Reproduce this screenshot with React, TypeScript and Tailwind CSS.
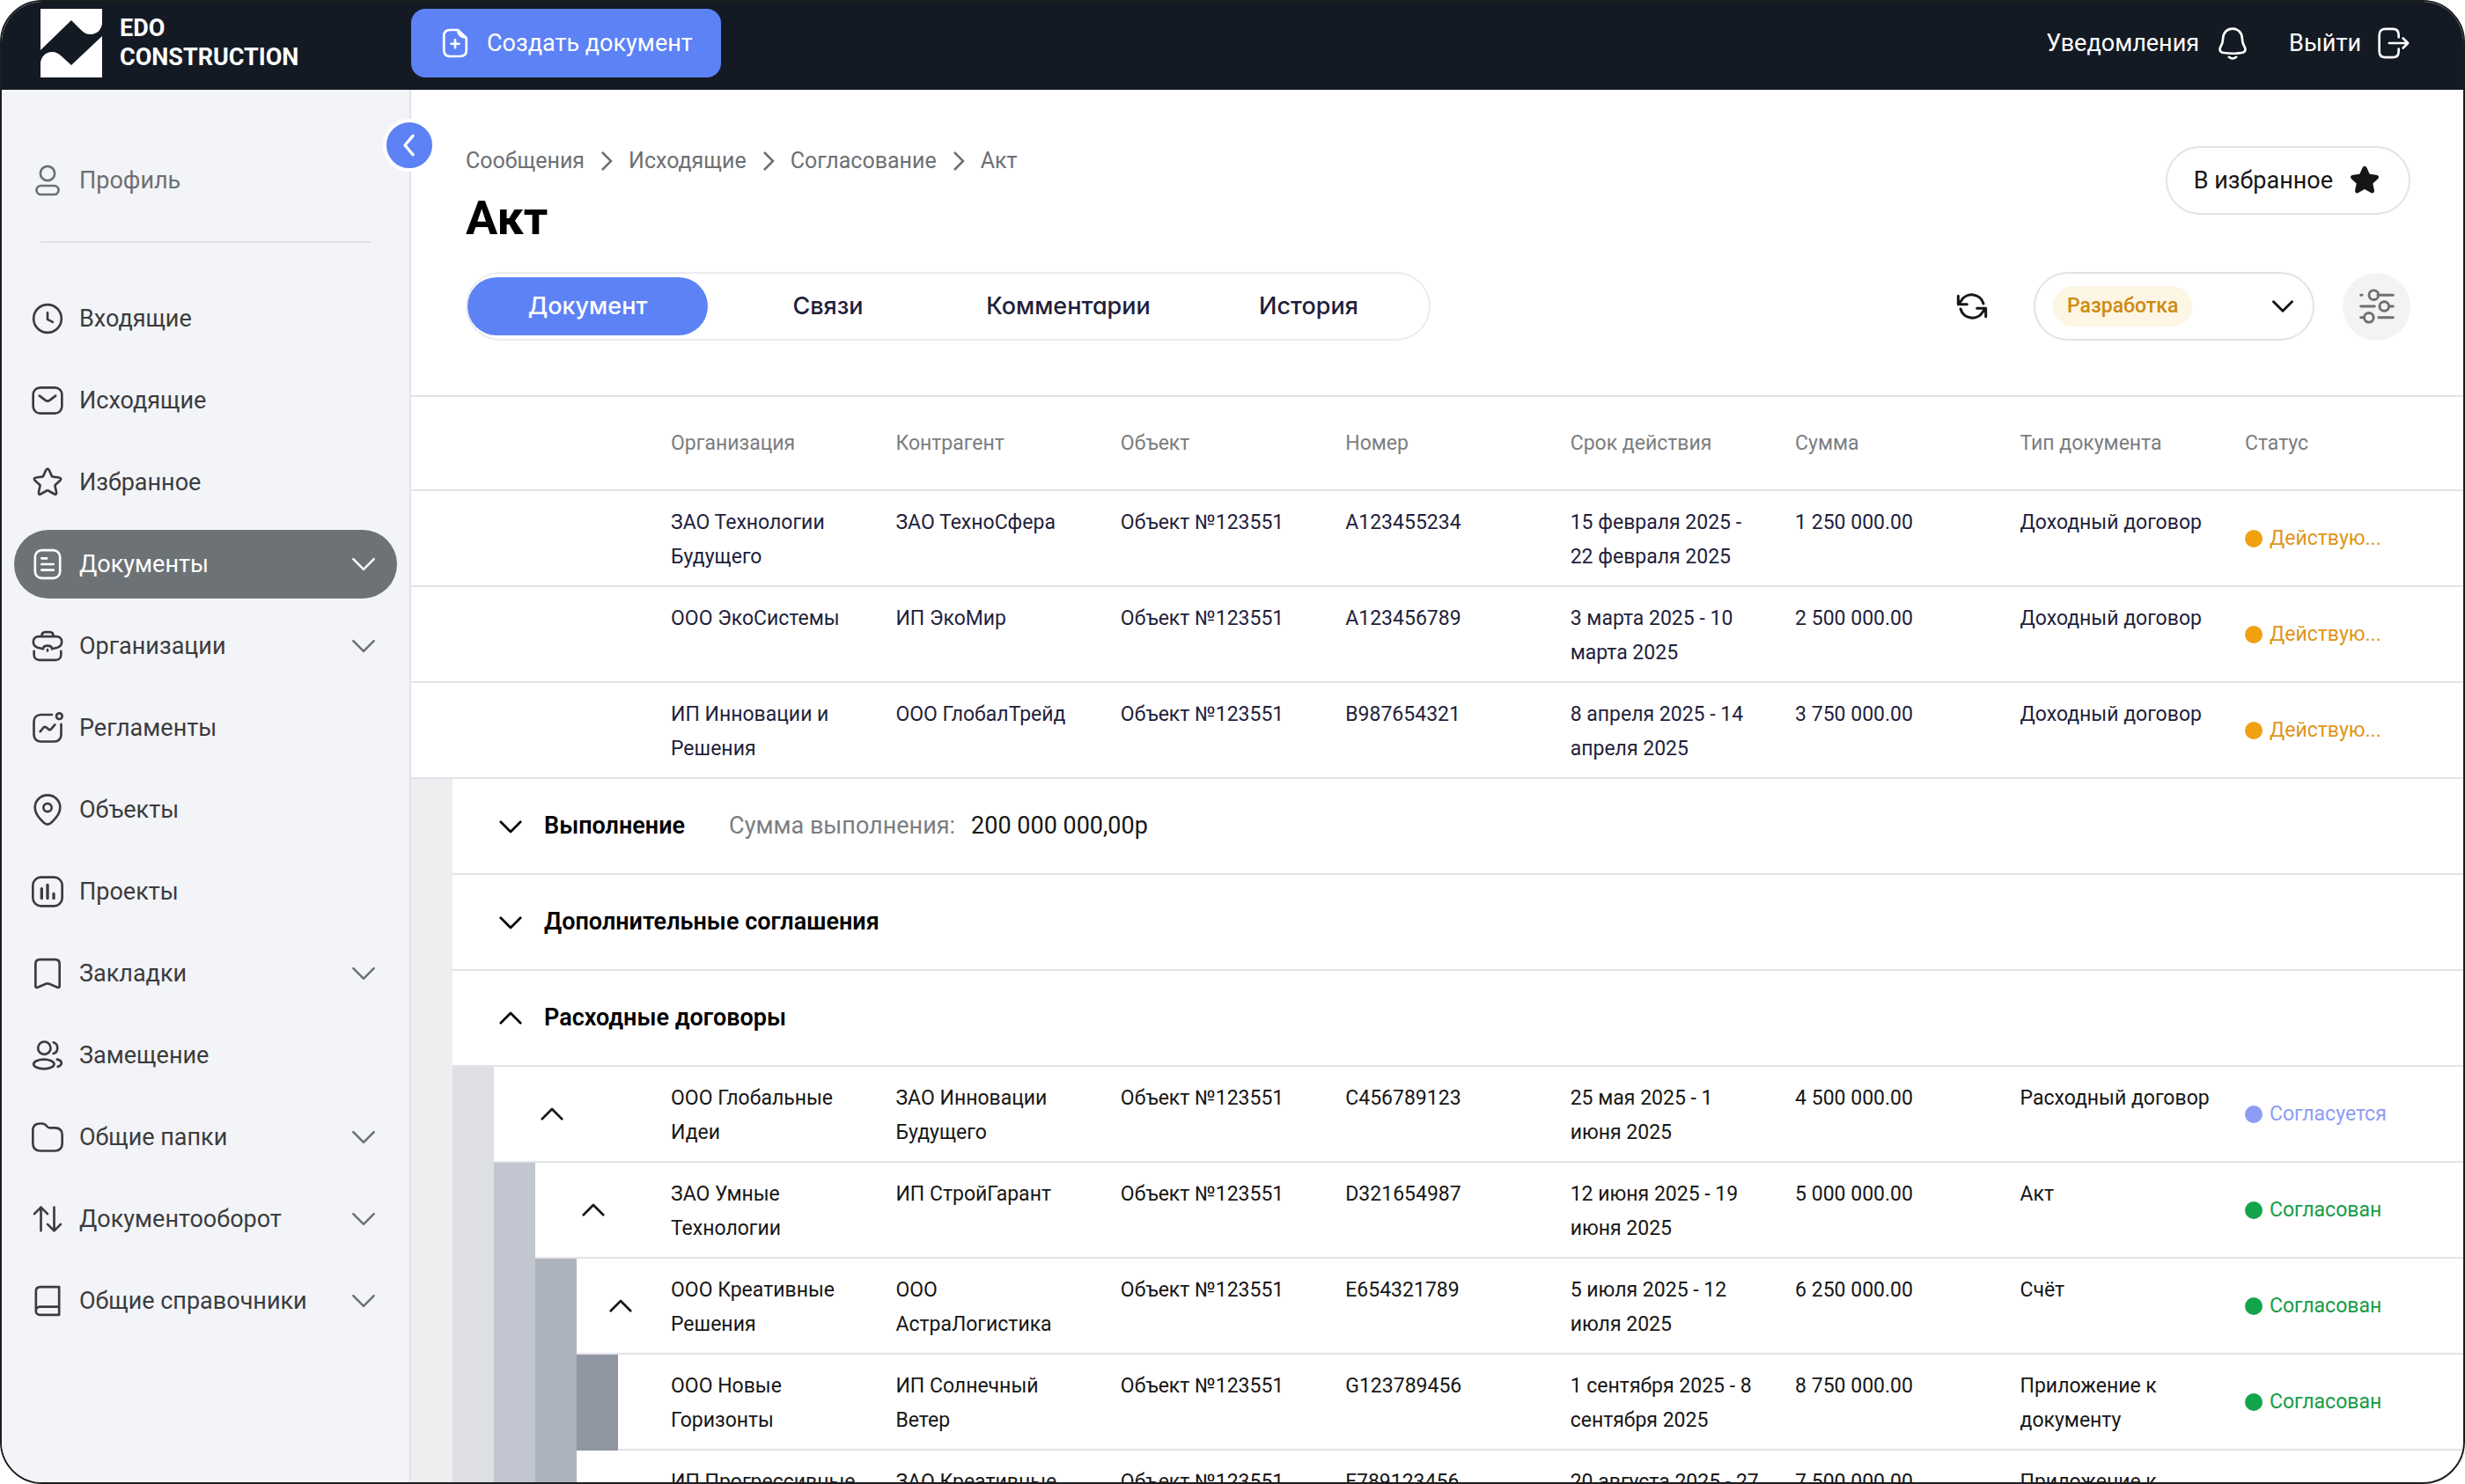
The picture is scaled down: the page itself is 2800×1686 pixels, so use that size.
import React from "react";

type IconProps = { className?: string; children: React.ReactNode; sw?: number };
function Icon({ className = "size-10", children, sw = 1.6 }: IconProps) {
  return (
    <svg viewBox="0 0 24 24" className={`${className} shrink-0`} fill="none" stroke="currentColor" strokeWidth={sw} strokeLinecap="round" strokeLinejoin="round" aria-hidden="true">
      {children}
    </svg>
  );
}

const STAR = "M12 2.800c.5 0 .9.4 1.200 1.100l1.700 3.800c.1.300.4.500.7.500l4.100.5c1.500.200 1.900 1.100.8 2.100l-3.100 2.800c-.2.200-.3.500-.3.800l.9 4.200c.3 1.400-.4 2-1.700 1.200l-3.700-2.100a1.200 1.200 0 0 0-1.200 0l-3.700 2.100c-1.300.8-2 .2-1.700-1.200l.9-4.200c.1-.3 0-.6-.3-.8l-3.100-2.800c-1.100-1-.7-1.900.8-2.100l4.100-.5c.3 0 .6-.2.700-.5l1.700-3.800c.3-.7.7-1.100 1.200-1.100z";

const ChevronDown = ({ className = "size-10", sw = 1.5 }: { className?: string; sw?: number }) => (
  <Icon className={className} sw={sw}><path d="m5 8.500 7 7 7-7" /></Icon>
);
const ChevronUp = () => (
  <Icon className="size-9" sw={1.8}><path d="m4.500 15.500 7.500-7.500 7.500 7.500" /></Icon>
);

const icons = {
  user: <><circle cx="12" cy="7.200" r="4.900" /><rect x="4.500" y="15.600" width="15" height="6" rx="3" /></>,
  clock: <><circle cx="12" cy="12" r="9.500" /><path d="M12 8v4.500l3.500 1.800" /></>,
  mail: <><rect x="2.200" y="3.200" width="19.600" height="17.600" rx="4.800" /><path d="m6.500 8.800 3.900 3c1 .7 2.200.7 3.200 0l3.900-3" /></>,
  star: <path d={STAR} />,
  doc: <><rect x="3.500" y="2.500" width="17" height="19" rx="4.500" /><path d="M8 8h3.500M8 12h8M8 16h8" /></>,
  bag: <><path d="M8 5.500c0-2 1-3 2.500-3h3c1.500 0 2.500 1 2.500 3M6 5.500h12c2.200 0 3.700 1.400 3.700 3.500s-1 3.400-3 4l-3.700 1c0-1.400-1.300-2.200-3-2.200s-3 .8-3 2.200l-3.700-1c-2-.6-3-1.900-3-4s1.500-3.500 3.700-3.500zM2.800 15.500v2.300c0 2.200 1.400 3.700 3.700 3.700h11c2.300 0 3.700-1.500 3.700-3.700v-2.300M12 14.500v.8" /></>,
  trend: <><path d="M15 3H7.500C4.500 3 2.700 4.800 2.700 7.800v8.700c0 3 1.800 4.800 4.800 4.800h9c3 0 4.800-1.800 4.800-4.800V9.500" /><circle cx="20" cy="4" r="2" /><path d="m7 14.500 2.300-2.800c.5-.5 1.200-.5 1.700-.1l1.800 1.400c.5.400 1.200.300 1.600-.2L17 9.800" /></>,
  pin: <><path d="M12 22c-1.200 0-2-.6-3.100-1.700C5.700 17.300 3.400 14.500 3.400 10.400a8.600 8.400 0 0 1 17.200 0c0 4.100-2.300 6.900-5.500 9.900C14 21.400 13.200 22 12 22z" /><circle cx="12" cy="10.500" r="2.800" /></>,
  chart: <><rect x="2" y="2.200" width="20" height="19.600" rx="5.500" /><path d="M8 10v6.500M12 7.500v9M16.200 13.500v3" strokeWidth="2" /></>,
  bookmark: <path d="M3.800 20.500V5.500c0-2 1-3 3-3h10.400c2 0 3 1 3 3v15c0 1-.6 1.300-1.500.9l-5.500-2.300c-.8-.400-1.600-.400-2.400 0l-5.500 2.300c-.9.400-1.500.1-1.500-.9z" />,
  users: <><circle cx="9.800" cy="7" r="4.300" /><ellipse cx="9.500" cy="18" rx="7" ry="3.200" /><path d="M16 3.200a4 4 0 0 1 0 7.600M18.500 14.800c1.900.4 3 1.300 3 2.500s-.9 2-2.500 2.400" /></>,
  folder: <path d="M22 10.500v5.700c0 3.300-1.900 5.100-5.200 5.100H7.200C3.900 21.300 2 19.500 2 16.200V7.500C2 4.300 3.700 2.700 6.800 2.700h1.500c1.300 0 2.200.5 3 1.500l.5.600c.5.600 1 .8 1.800.8H17c3.200 0 5 1.700 5 4.900z" />,
  arrows: <path d="M7.500 20V4M3 8.500 7.500 4 12 8.500M16.500 4v16M12 15.500l4.500 4.500 4.500-4.500" />,
  book: <path d="M19.900 16V2.500H7.100c-2 0-3 1-3 3v13.200M19.900 16v5.500H6.800a2.700 2.700 0 0 1 0-5.500h13.100" />,
};

const nav: { icon: keyof typeof icons; label: string; open?: boolean; active?: boolean }[] = [
  { icon: "clock", label: "Входящие" },
  { icon: "mail", label: "Исходящие" },
  { icon: "star", label: "Избранное" },
  { icon: "doc", label: "Документы", open: true, active: true },
  { icon: "bag", label: "Организации", open: true },
  { icon: "trend", label: "Регламенты" },
  { icon: "pin", label: "Объекты" },
  { icon: "chart", label: "Проекты" },
  { icon: "bookmark", label: "Закладки", open: true },
  { icon: "users", label: "Замещение" },
  { icon: "folder", label: "Общие папки", open: true },
  { icon: "arrows", label: "Документооборот", open: true },
  { icon: "book", label: "Общие справочники", open: true },
];

type Row = { level: number; cells: string[]; status: "active" | "review" | "done"; toggle?: boolean };
const topRows: Row[] = [
  { level: 0, cells: ["ЗАО Технологии Будущего", "ЗАО ТехноСфера", "Объект №123551", "A123455234", "15 февраля 2025 - 22 февраля 2025", "1 250 000.00", "Доходный договор"], status: "active" },
  { level: 0, cells: ["ООО ЭкоСистемы", "ИП ЭкоМир", "Объект №123551", "A123456789", "3 марта 2025 - 10 марта 2025", "2 500 000.00", "Доходный договор"], status: "active" },
  { level: 0, cells: ["ИП Инновации и Решения", "ООО ГлобалТрейд", "Объект №123551", "B987654321", "8 апреля 2025 - 14 апреля 2025", "3 750 000.00", "Доходный договор"], status: "active" },
];
const sections = [
  { title: "Выполнение", sum: "200 000 000,00р", open: false },
  { title: "Дополнительные соглашения", open: false },
  { title: "Расходные договоры", open: true },
];
const treeRows: Row[] = [
  { level: 2, toggle: true, cells: ["ООО Глобальные Идеи", "ЗАО Инновации Будущего", "Объект №123551", "C456789123", "25 мая 2025 - 1 июня 2025", "4 500 000.00", "Расходный договор"], status: "review" },
  { level: 3, toggle: true, cells: ["ЗАО Умные Технологии", "ИП СтройГарант", "Объект №123551", "D321654987", "12 июня 2025 - 19 июня 2025", "5 000 000.00", "Акт"], status: "done" },
  { level: 4, toggle: true, cells: ["ООО Креативные Решения", "ООО АстраЛогистика", "Объект №123551", "E654321789", "5 июля 2025 - 12 июля 2025", "6 250 000.00", "Счёт"], status: "done" },
  { level: 5, cells: ["ООО Новые Горизонты", "ИП Солнечный Ветер", "Объект №123551", "G123789456", "1 сентября 2025 - 8 сентября 2025", "8 750 000.00", "Приложение к документу"], status: "done" },
  { level: 4, cells: ["ИП Прогрессивные Системы", "ЗАО Креативные Решения", "Объект №123551", "F789123456", "20 августа 2025 - 27 августа 2025", "7 500 000.00", "Приложение к документу"], status: "done" },
];
const columns = ["Организация", "Контрагент", "Объект", "Номер", "Срок действия", "Сумма", "Тип документа", "Статус"];

const levelColors = ["bg-[#edeef0]", "bg-[#dedfe3]", "bg-[#c2c6d0]", "bg-[#adb3bd]", "bg-[#8f95a1]"];
const statuses = {
  active: { text: "Действую...", color: "text-[#dd9619]", dot: "bg-[#f0a010]" },
  review: { text: "Согласуется", color: "text-[#8d9df5]", dot: "bg-[#8d9df5]" },
  done: { text: "Согласован", color: "text-[#169c46]", dot: "bg-[#14a44d]" },
};

function Bands({ level }: { level: number }) {
  return (
    <>
      {levelColors.slice(0, level).map((c) => (
        <div key={c} className={`${c} w-[47px] shrink-0`} />
      ))}
    </>
  );
}

function DataRow({ row }: { row: Row }) {
  const s = statuses[row.status];
  return (
    <tr className={`h-[109px] ${row.level ? "text-[#161616]" : "text-[#1f1f3d]"}`}>
      <td className="h-[109px] p-0">
        <div className="flex h-full min-h-[109px]">
          <Bands level={row.level} />
          <div className={`flex grow items-center border-b-2 border-[#e2e3e8] ${row.level === 4 ? "pl-8" : "pl-12"}`}>
            {row.toggle && (
              <button type="button" aria-label="Свернуть"><ChevronUp /></button>
            )}
          </div>
        </div>
      </td>
      {row.cells.map((c, i) => (
        <td key={i} className="border-b-2 border-[#e2e3e8] pt-4 pr-9 align-top">{c}</td>
      ))}
      <td className={`border-b-2 border-[#e2e3e8] align-middle whitespace-nowrap ${s.color}`}>
        <span className="flex items-center gap-2">
          <span className={`size-5 shrink-0 rounded-full ${s.dot}`} />
          {s.text}
        </span>
      </td>
    </tr>
  );
}

export default function App() {
  return (
    <div className="flex h-screen flex-col overflow-hidden rounded-[48px] border-2 border-[#1b1c1e] bg-white font-['Roboto',sans-serif] text-[#161616]">
      <header className="flex h-[100px] shrink-0 items-center bg-[#141a24] pr-[60px] pb-[6px] pl-11 text-[27px] text-white">
        <a href="#" className="flex w-[421px] items-center gap-5 leading-[33px] font-bold">
          <svg viewBox="0 0 70 78" className="h-[78px] w-[70px]" aria-hidden="true">
            <path fill="#fff" d="M0 0h70v17c-1 7-6 12-13 12-5 0-8-2-11-5L35 13 0 47z" />
            <path fill="#fff" d="M70 31v47H0V61c1-7 6-12 13-12 5 0 8 2 11 5l11 10z" />
          </svg>
          <span>EDO<br />CONSTRUCTION</span>
        </a>
        <button type="button" className="flex h-[78px] items-center gap-[18px] rounded-2xl bg-[#5d82f5] px-8">
          <Icon className="size-9" sw={1.8}>
            <path d="M14 2H8.500C5.200 2 3.500 3.600 3.500 6.500v11c0 2.900 1.700 4.500 5 4.500h7c3.300 0 5-1.600 5-4.500V8zM14 2c.3 3.500 2.200 5.700 6.500 6M12 9.500v6M9 12.500h6" />
          </Icon>
          Создать документ
        </button>
        <nav className="ml-auto flex items-center gap-11">
          <a href="#" className="flex items-center gap-[18px]">
            Уведомления
            <Icon>
              <path d="M12 2.200c-4 0-6.300 2.800-6.500 6.300-.1 2.500-.3 3.800-1.400 5.500-1.500 2.400-.8 4.200 1.900 4.600 4 .6 8 .6 12 0 2.700-.4 3.400-2.200 1.900-4.600-1.100-1.700-1.300-3-1.400-5.500-.2-3.500-2.500-6.300-6.500-6.300zM9.500 21.500c1.500 1.200 3.500 1.200 5 0" />
            </Icon>
          </a>
          <a href="#" className="flex items-center gap-4">
            Выйти
            <Icon><path d="M16 8V6.500C16 3.800 14.700 2.300 12 2.300H7C4.300 2.300 2.800 3.800 2.800 6.500v11c0 2.700 1.500 4.200 4.200 4.200h5c2.700 0 4-1.500 4-4.200V16M9.500 12h12.700M19 8.700l3.300 3.300-3.300 3.300" /></Icon>
          </a>
        </nav>
      </header>

      <div className="flex min-h-0 grow">
        <aside className="relative w-[465px] shrink-0 border-r-2 border-[#e2e3e8] bg-[#f3f4f7] text-[27px] text-[#3b3c3f]">
          <button type="button" aria-label="Свернуть меню" className="absolute top-[33px] -right-[30px] z-10 flex size-[60px] items-center justify-center rounded-full border-4 border-white bg-[#5d82f5] text-white">
            <Icon className="size-10" sw={2}><path d="M14.500 5.500 9 12l5.500 6.500" /></Icon>
          </button>
          <div className="px-[14px] pt-16">
            <a href="#" className="flex h-[78px] items-center gap-4 px-[18px] text-[#6d7073]">
              <Icon>{icons.user}</Icon>
              Профиль
            </a>
          </div>
          <hr className="mx-11 mt-[30px] border-t-2 border-[#dfe1e5]" />
          <nav className="flex flex-col gap-[15px] px-[14px] pt-[47px]">
            {nav.map((n) => (
              <a key={n.label} href="#" className={n.active ? "flex h-[78px] items-center gap-4 rounded-full bg-[#6d7276] px-[18px] text-white" : "flex h-[78px] items-center gap-4 px-[18px]"}>
                <Icon>{icons[n.icon]}</Icon>
                <span className="grow">{n.label}</span>
                {n.open && <ChevronDown className={n.active ? "size-10 text-white" : "size-10 text-[#6d7073]"} />}
              </a>
            ))}
          </nav>
        </aside>

        <main className="min-w-0 grow overflow-hidden">
          <div className="flex items-start justify-between pt-16 pr-[60px] pl-[62px]">
            <div>
              <nav className="flex h-[34px] items-center gap-[17px] text-[25px] text-[#6d7073]" aria-label="Навигация">
                {["Сообщения", "Исходящие", "Согласование", "Акт"].map((b, i) => (
                  <React.Fragment key={b}>
                    {i > 0 && (
                      <svg viewBox="0 0 16 24" className="h-6 w-4 shrink-0" fill="none" stroke="currentColor" strokeWidth="2.500" aria-hidden="true"><path d="m3 2 10 10L3 22" /></svg>
                    )}
                    <a href="#">{b}</a>
                  </React.Fragment>
                ))}
              </nav>
              <h1 className="mt-[14px] text-[54px] leading-[68px] font-bold text-black">Акт</h1>
            </div>
            <button type="button" className="flex h-[78px] items-center gap-4 rounded-full border-2 border-[#e2e3e8] px-[30px] text-[27px]">
              В избранное
              <svg viewBox="0 0 24 24" className="size-10" fill="currentColor" stroke="currentColor" strokeWidth="1" aria-hidden="true"><path d={STAR} /></svg>
            </button>
          </div>

          <div className="mt-[27px] flex items-center pr-[60px] pl-[62px]">
            <div role="tablist" className="flex h-[78px] items-center rounded-full border-2 border-[#ececee] font-['Inter',sans-serif] text-[27px] font-medium text-[#1f1f3d] [font-feature-settings:'cv11']">
              <button type="button" role="tab" aria-selected="true" className="h-[66px] w-[273px] rounded-full bg-[#5d82f5] text-white">Документ</button>
              <button type="button" role="tab" aria-selected="false" className="w-[273px]">Связи</button>
              <button type="button" role="tab" aria-selected="false" className="w-[273px]">Комментарии</button>
              <button type="button" role="tab" aria-selected="false" className="w-[273px]">История</button>
            </div>
            <button type="button" aria-label="Обновить" className="ml-auto">
              <Icon sw={1.8}><path d="M19.800 10.200A8.300 8.300 0 0 0 4.600 8.300L2.800 10.400M2.600 5v5.600h6M4.200 13.800a8.300 8.300 0 0 0 15.200 1.900l1.800-2.100M21.400 19v-5.600h-6" /></Icon>
            </button>
            <button type="button" aria-haspopup="listbox" className="ml-[50px] flex h-[78px] w-[319px] items-center justify-between rounded-full border-2 border-[#e2e3e8] pr-4 pl-5">
              <span className="flex h-[46px] items-center rounded-full bg-[#fdf6e4] px-4 text-[23px] font-medium text-[#cd8b10]">Разработка</span>
              <ChevronDown className="size-9" sw={2} />
            </button>
            <button type="button" aria-label="Фильтры" className="ml-8 flex size-[77px] items-center justify-center rounded-full bg-[#f3f3f4] text-[#6d7073]">
              <Icon className="size-11"><path d="M2 5h.8M12.500 5H22M2 12h8.500M19.500 12H22M2 19h1.500M13 19h9" /><circle cx="10" cy="5" r="2.900" /><circle cx="16.500" cy="12" r="2.900" /><circle cx="7" cy="19" r="2.900" /></Icon>
            </button>
          </div>

          <table className="mt-[62px] w-full table-fixed border-separate border-spacing-0 border-t-2 border-[#e2e3e8] text-left text-[23px] leading-[39px]">
            <colgroup>
              <col className="w-[295px]" />
              {columns.slice(0, -1).map((c) => <col key={c} />)}
              <col className="w-[248px]" />
            </colgroup>
            <thead>
              <tr className="h-[107px] text-[#7b7d81]">
                <td className="border-b-2 border-[#e2e3e8]" />
                {columns.map((c) => <th key={c} scope="col" className="border-b-2 border-[#e2e3e8] font-normal">{c}</th>)}
              </tr>
            </thead>
            <tbody>
              {topRows.map((r) => <DataRow key={r.cells[3]} row={r} />)}
              {sections.map((s) => (
                <tr key={s.title}>
                  <td colSpan={9} className="p-0">
                    <div className="flex h-[109px]">
                      <Bands level={1} />
                      <div className="flex grow items-center border-b-2 border-[#e2e3e8] pl-12 text-[27px]">
                        <button type="button" className="flex items-center gap-5 font-semibold text-black">
                          {s.open ? <ChevronUp /> : <Icon className="size-9" sw={1.8}><path d="m4.500 8.500 7.500 7.500 7.500-7.500" /></Icon>}
                          {s.title}
                        </button>
                        {s.sum && <span className="ml-[50px] text-[#7b7d81]">Сумма выполнения:</span>}
                        {s.sum && <span className="ml-[18px]">{s.sum}</span>}
                      </div>
                    </div>
                  </td>
                </tr>
              ))}
              {treeRows.map((r) => <DataRow key={r.cells[3]} row={r} />)}
            </tbody>
          </table>
        </main>
      </div>
    </div>
  );
}
